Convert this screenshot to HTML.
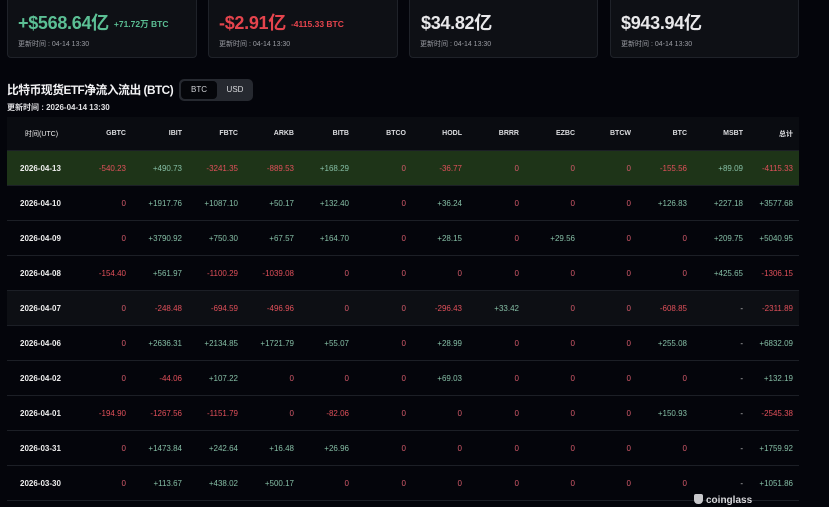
<!DOCTYPE html>
<html><head><meta charset="utf-8"><style>
*{margin:0;padding:0;box-sizing:border-box}
body{width:829px;height:507px;overflow:hidden;background:#04050b;font-family:"Liberation Sans","Noto Sans CJK SC",sans-serif;color:#e8e8ea;position:relative}
.card{position:absolute;top:-4px;height:62px;background:#0e1015;border:1px solid #1f2229;border-radius:4px}
.big{position:absolute;left:10px;top:12px;font-size:18px;font-weight:bold;letter-spacing:-0.3px;white-space:nowrap}
.sub{font-size:8.5px;font-weight:bold;margin-left:5px;letter-spacing:0;vertical-align:2px}
.upd{position:absolute;left:10px;top:42px;font-size:7px;color:#9a9ca3}
.g{color:#5bbf94}.r{color:#e5444d}
.title{position:absolute;left:7px;top:81px;font-size:11.8px;font-weight:bold;color:#f2f2f4;letter-spacing:-0.5px;white-space:nowrap}
.tog{position:absolute;left:179px;top:79px;width:74px;height:22px;background:#262930;border-radius:5px}
.tog .a{position:absolute;left:2px;top:2px;width:36px;height:18px;background:#05060a;border-radius:4px;font-size:8px;color:#cfd0d4;text-align:center;line-height:18px}
.tog .b{position:absolute;left:40px;top:2px;width:32px;height:18px;font-size:8px;color:#d8d9dc;text-align:center;line-height:18px}
.utime{position:absolute;left:7px;top:102px;font-size:8px;font-weight:bold;color:#e0e0e3}
.tbl{position:absolute;left:7px;top:117px;width:792px}
.row{display:flex;height:35px;align-items:center;border-bottom:1px solid #1c1f26;font-size:8px}
.row div{text-align:right}
.row .d{width:63px;text-align:left;padding-left:13px;font-weight:bold;color:#eee}
.hd{height:34px;background:#0a0c11;color:#dcdde0;font-weight:bold;font-size:7px}
.hd .d{padding-left:18px;font-weight:normal}
.c{width:56px}
.p{color:#86bfa6}.n{color:#e0505a}.z{color:#d45a6a}.w{color:#ccc}
.hl{background:#1e3418}
.alt{background:#0d0f14}
</style></head><body>
<div class="card" style="left:7px;width:190px"><div class="big g">+$568.64亿<span class="sub">+71.72万 BTC</span></div><div class="upd">更新时间 : 04-14 13:30</div></div>
<div class="card" style="left:208px;width:190px"><div class="big r">-$2.91亿<span class="sub">-4115.33 BTC</span></div><div class="upd">更新时间 : 04-14 13:30</div></div>
<div class="card" style="left:409px;width:189px"><div class="big" style="left:11px">$34.82亿</div><div class="upd">更新时间 : 04-14 13:30</div></div>
<div class="card" style="left:610px;width:189px"><div class="big">$943.94亿</div><div class="upd">更新时间 : 04-14 13:30</div></div>
<div class="title">比特币现货ETF净流入流出 (BTC)</div>
<div class="tog"><div class="a">BTC</div><div class="b">USD</div></div>
<div class="utime">更新时间 : 2026-04-14 13:30</div>
<div class="tbl">
<div class="row hd"><div class="d">时间(UTC)</div><div class="c">GBTC</div><div class="c">IBIT</div><div class="c">FBTC</div><div class="c">ARKB</div><div class="c" style="width:55px">BITB</div><div class="c" style="width:57px">BTCO</div><div class="c">HODL</div><div class="c" style="width:57px">BRRR</div><div class="c">EZBC</div><div class="c">BTCW</div><div class="c">BTC</div><div class="c">MSBT</div><div class="c" style="width:50px">总计</div></div>
<div class="row hl"><div class="d">2026-04-13</div><div class="c n">-540.23</div><div class="c p">+490.73</div><div class="c n">-3241.35</div><div class="c n">-889.53</div><div class="c p" style="width:55px">+168.29</div><div class="c z" style="width:57px">0</div><div class="c n">-36.77</div><div class="c z" style="width:57px">0</div><div class="c z">0</div><div class="c z">0</div><div class="c n">-155.56</div><div class="c p">+89.09</div><div class="c n" style="width:50px">-4115.33</div></div>
<div class="row"><div class="d">2026-04-10</div><div class="c z">0</div><div class="c p">+1917.76</div><div class="c p">+1087.10</div><div class="c p">+50.17</div><div class="c p" style="width:55px">+132.40</div><div class="c z" style="width:57px">0</div><div class="c p">+36.24</div><div class="c z" style="width:57px">0</div><div class="c z">0</div><div class="c z">0</div><div class="c p">+126.83</div><div class="c p">+227.18</div><div class="c p" style="width:50px">+3577.68</div></div>
<div class="row"><div class="d">2026-04-09</div><div class="c z">0</div><div class="c p">+3790.92</div><div class="c p">+750.30</div><div class="c p">+67.57</div><div class="c p" style="width:55px">+164.70</div><div class="c z" style="width:57px">0</div><div class="c p">+28.15</div><div class="c z" style="width:57px">0</div><div class="c p">+29.56</div><div class="c z">0</div><div class="c z">0</div><div class="c p">+209.75</div><div class="c p" style="width:50px">+5040.95</div></div>
<div class="row"><div class="d">2026-04-08</div><div class="c n">-154.40</div><div class="c p">+561.97</div><div class="c n">-1100.29</div><div class="c n">-1039.08</div><div class="c z" style="width:55px">0</div><div class="c z" style="width:57px">0</div><div class="c z">0</div><div class="c z" style="width:57px">0</div><div class="c z">0</div><div class="c z">0</div><div class="c z">0</div><div class="c p">+425.65</div><div class="c n" style="width:50px">-1306.15</div></div>
<div class="row alt"><div class="d">2026-04-07</div><div class="c z">0</div><div class="c n">-248.48</div><div class="c n">-694.59</div><div class="c n">-496.96</div><div class="c z" style="width:55px">0</div><div class="c z" style="width:57px">0</div><div class="c n">-296.43</div><div class="c p" style="width:57px">+33.42</div><div class="c z">0</div><div class="c z">0</div><div class="c n">-608.85</div><div class="c w">-</div><div class="c n" style="width:50px">-2311.89</div></div>
<div class="row"><div class="d">2026-04-06</div><div class="c z">0</div><div class="c p">+2636.31</div><div class="c p">+2134.85</div><div class="c p">+1721.79</div><div class="c p" style="width:55px">+55.07</div><div class="c z" style="width:57px">0</div><div class="c p">+28.99</div><div class="c z" style="width:57px">0</div><div class="c z">0</div><div class="c z">0</div><div class="c p">+255.08</div><div class="c w">-</div><div class="c p" style="width:50px">+6832.09</div></div>
<div class="row"><div class="d">2026-04-02</div><div class="c z">0</div><div class="c n">-44.06</div><div class="c p">+107.22</div><div class="c z">0</div><div class="c z" style="width:55px">0</div><div class="c z" style="width:57px">0</div><div class="c p">+69.03</div><div class="c z" style="width:57px">0</div><div class="c z">0</div><div class="c z">0</div><div class="c z">0</div><div class="c w">-</div><div class="c p" style="width:50px">+132.19</div></div>
<div class="row"><div class="d">2026-04-01</div><div class="c n">-194.90</div><div class="c n">-1267.56</div><div class="c n">-1151.79</div><div class="c z">0</div><div class="c n" style="width:55px">-82.06</div><div class="c z" style="width:57px">0</div><div class="c z">0</div><div class="c z" style="width:57px">0</div><div class="c z">0</div><div class="c z">0</div><div class="c p">+150.93</div><div class="c w">-</div><div class="c n" style="width:50px">-2545.38</div></div>
<div class="row"><div class="d">2026-03-31</div><div class="c z">0</div><div class="c p">+1473.84</div><div class="c p">+242.64</div><div class="c p">+16.48</div><div class="c p" style="width:55px">+26.96</div><div class="c z" style="width:57px">0</div><div class="c z">0</div><div class="c z" style="width:57px">0</div><div class="c z">0</div><div class="c z">0</div><div class="c z">0</div><div class="c w">-</div><div class="c p" style="width:50px">+1759.92</div></div>
<div class="row"><div class="d">2026-03-30</div><div class="c z">0</div><div class="c p">+113.67</div><div class="c p">+438.02</div><div class="c p">+500.17</div><div class="c z" style="width:55px">0</div><div class="c z" style="width:57px">0</div><div class="c z">0</div><div class="c z" style="width:57px">0</div><div class="c z">0</div><div class="c z">0</div><div class="c z">0</div><div class="c w">-</div><div class="c p" style="width:50px">+1051.86</div></div>
</div>
<div style="position:absolute;left:694px;top:494px;font-size:10px;font-weight:bold;color:#d8d8db"><span style="display:inline-block;width:9px;height:10px;background:#c8c8cc;border-radius:2px 2px 4px 4px;vertical-align:-1px;margin-right:3px"></span>coinglass</div>
</body></html>
